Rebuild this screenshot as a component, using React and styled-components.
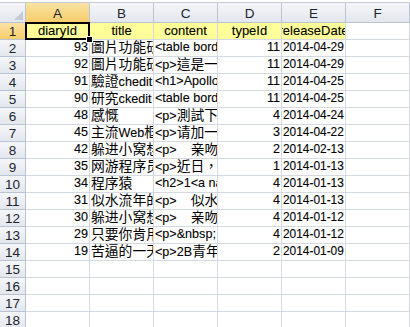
import React from "react";
import styled, { createGlobalStyle, css } from "styled-components";

const Global = createGlobalStyle`
  html, body { margin: 0; padding: 0; background: #fff; }
  body { font-family: "Liberation Sans", "Noto Sans CJK TC", Arial, sans-serif; }
`;

const GRID = "#d4d9e2";
const HEAD_LINE = "#b9c3d1";

const Sheet = styled.div`
  width: 410px;
  height: 327px;
  overflow: hidden;
  background: #fff;
`;

const TopStrip = styled.div`
  height: 2px;
  border-bottom: 1px solid #c6ccd6;
  background: #fff;
`;

const Grid = styled.div`
  display: grid;
  grid-template-columns: 26px repeat(6, 64px);
  grid-template-rows: 20px repeat(18, 17px);
  font-size: 12.6px;
  color: #000;
`;

const headBase = css`
  box-sizing: border-box;
  display: flex;
  align-items: center;
  justify-content: center;
  border-right: 1px solid ${HEAD_LINE};
  border-bottom: 1px solid ${HEAD_LINE};
  color: #1d2430;
  font-size: 13.5px;
  background: ${(p) =>
    p.$active
      ? "linear-gradient(#fbe3a4, #f6cd6a)"
      : "linear-gradient(#f4f6f9, #e3e7ee)"};
`;

const Corner = styled.div`
  ${headBase};
  position: relative;
  &::after {
    content: "";
    position: absolute;
    right: 2px;
    bottom: 2px;
    width: 0;
    height: 0;
    border-left: 9px solid transparent;
    border-bottom: 9px solid #c3cbd6;
  }
`;

const ColHead = styled.div`
  ${headBase};
  padding-top: 2px;
`;

const RowHead = styled.div`
  ${headBase};
  padding-top: 1px;
`;

const Cell = styled.div`
  box-sizing: border-box;
  position: relative;
  border-right: 1px solid ${GRID};
  border-bottom: 1px solid ${GRID};
  background: ${(p) => (p.$fill ? "#ffff99" : "#fff")};
  display: flex;
  align-items: center;
  padding-bottom: 1px;
  ${(p) =>
    p.$selected &&
    css`
      &::after {
        content: "";
        position: absolute;
        top: -1px;
        left: -1px;
        right: -1px;
        bottom: -1px;
        border: 2px solid #000;
        pointer-events: none;
      }
    `}
`;

const Handle = styled.span`
  position: absolute;
  right: -4px;
  bottom: -4px;
  width: 5px;
  height: 5px;
  background: #000;
  border: 1px solid #fff;
  z-index: 2;
`;

const Text = styled.span`
  flex: 1;
  display: flex;
  align-items: baseline;
  overflow: hidden;
  white-space: pre;
  line-height: 15px;
  font-size: ${(p) => p.$size || "inherit"};
  -webkit-text-stroke: 0.1px #000;
  justify-content: ${(p) =>
    p.$align === "right" ? "flex-end" : p.$align === "center" ? "center" : "flex-start"};
  padding: ${(p) => (p.$align === "right" ? "0 1px 0 0" : p.$align === "center" ? "0" : "0 0 0 1px")};
`;

const Cjk = styled.span`
  font-size: 13.8px;
  line-height: 15px;
  -webkit-text-stroke: 0;
`;

const cols = ["A", "B", "C", "D", "E", "F"];
const headers = ["diaryId", "title", "content", "typeId", "releaseDate"];
const rows = [
  ["93", "圖片功能研究", "<table border", "11", "2014-04-29"],
  ["92", "圖片功能研究", "<p>這是一個", "11", "2014-04-29"],
  ["91", "驗證chedit", "<h1>Apollo", "11", "2014-04-25"],
  ["90", "研究ckedit", "<table border", "11", "2014-04-25"],
  ["48", "感慨", "<p>測試下", "4", "2014-04-24"],
  ["45", "主流Web框架", "<p>请加一", "3", "2014-04-22"],
  ["42", "躲进小窝想", "<p>    亲吻", "2", "2014-02-13"],
  ["35", "网游程序员", "<p>近日，", "1", "2014-01-13"],
  ["34", "程序猿", "<h2>1<a name", "4", "2014-01-13"],
  ["31", "似水流年的", "<p>    似水", "4", "2014-01-13"],
  ["30", "躲进小窝想", "<p>    亲吻", "4", "2014-01-12"],
  ["29", "只要你肯用", "<p>&nbsp;", "4", "2014-01-12"],
  ["19", "苦逼的一天", "<p>2B青年", "2", "2014-01-09"],
];

const alignFor = (ci) => (ci === 0 || ci === 3 ? "right" : "left");

const CJK_RE = /([\u3000-\u303f\u3400-\u9fff\uff00-\uffef]+)/;

function Rich({ text }) {
  if (!text) return null;
  return text.split(CJK_RE).map((part, i) =>
    i % 2 === 1 ? <Cjk key={i}>{part}</Cjk> : part ? <span key={i}>{part}</span> : null
  );
}

export default function App() {
  const cells = [];
  cells.push(<Corner key="corner" />);
  cols.forEach((c, i) =>
    cells.push(
      <ColHead key={"h" + c} $active={i === 0}>
        {c}
      </ColHead>
    )
  );

  for (let r = 1; r <= 18; r++) {
    cells.push(
      <RowHead key={"r" + r} $active={r === 1}>
        {r}
      </RowHead>
    );
    for (let ci = 0; ci < 6; ci++) {
      let content = null;
      let align = "left";
      let size;
      if (r === 1 && ci < 5) {
        content = headers[ci];
        align = "center";
        size = "13px";
      } else if (r >= 2 && r <= 14 && ci < 5) {
        content = rows[r - 2][ci];
        align = alignFor(ci);
        if (ci === 4) size = "11.9px";
      }
      const selected = r === 1 && ci === 0;
      cells.push(
        <Cell key={`c${r}-${ci}`} $fill={r === 1 && ci < 5} $selected={selected}>
          <Text $align={align} $size={size}>
            <Rich text={content} />
          </Text>
          {selected && <Handle />}
        </Cell>
      );
    }
  }

  return (
    <Sheet>
      <Global />
      <TopStrip />
      <Grid>{cells}</Grid>
    </Sheet>
  );
}
